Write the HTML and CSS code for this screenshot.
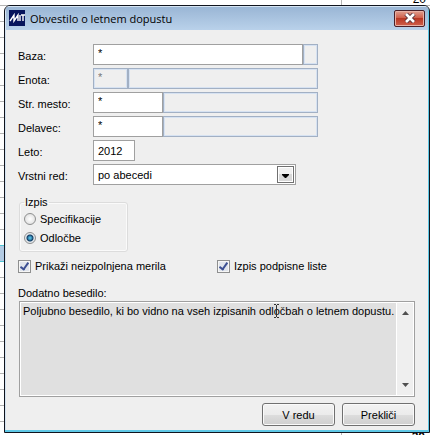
FILE: index.html
```html
<!DOCTYPE html>
<html lang="sl">
<head>
    <meta charset="UTF-8">
    <meta name="viewport" content="width=device-width, initial-scale=1.0">
    <title>Obvestilo o letnem dopustu</title>
    <link rel="stylesheet" href="styles.css">
</head>
<body>
    <div class="sheet-top"><span>20</span></div>
    <div class="sheet">
        <div class="selected-row"></div>
        <form class="dialog">
            <div class="titlebar">
                <svg class="logo" width="16" height="16" viewBox="0 0 16 16">
                    <rect width="16" height="16" fill="#07145c"/>
                    <path d="M1 11L5 5V11L9 5V11M11 5V11M12 5H16M14 5V11" fill="none" stroke="#fff" stroke-width="1.4"/>
                </svg>
                <h1>Obvestilo o letnem dopustu</h1>
                <button class="close" type="button" aria-label="Zapri">
                    <svg width="12" height="10" viewBox="0 0 12 10">
                        <path d="M2 1L10 9M10 1L2 9" stroke="#54303a" stroke-width="4.4"/>
                        <path d="M2 1L10 9M10 1L2 9" stroke="#fff" stroke-width="2.6"/>
                    </svg>
                </button>
            </div>
            <div class="content">
                <div class="fields">
                    <div class="row">
                        <label for="baza">Baza:</label>
                        <input class="box wide star" id="baza" type="text" value="*">
                        <input class="box tiny off" type="text" aria-label="Izbor baze" disabled>
                    </div>
                    <div class="row">
                        <label for="enota">Enota:</label>
                        <input class="box short star off" id="enota" type="text" value="*" disabled>
                        <input class="box wide off" type="text" aria-label="Naziv enote" disabled>
                    </div>
                    <div class="row">
                        <label for="mesto">Str. mesto:</label>
                        <input class="box medium star" id="mesto" type="text" value="*">
                        <input class="box wide off" type="text" aria-label="Naziv mesta" disabled>
                    </div>
                    <div class="row">
                        <label for="delavec">Delavec:</label>
                        <input class="box medium star" id="delavec" type="text" value="*">
                        <input class="box wide off" type="text" aria-label="Ime delavca" disabled>
                    </div>
                    <div class="row">
                        <label for="leto">Leto:</label>
                        <input class="box year" id="leto" type="text" value="2012">
                    </div>
                    <div class="row">
                        <label for="red">Vrstni red:</label>
                        <div class="select-wrap">
                            <select class="box" id="red">
                                <option>po abecedi</option>
                            </select>
                            <svg class="arrow" width="17" height="17" viewBox="0 0 17 17">
                                <rect x="0.5" y="0.5" width="16" height="16" fill="#fff" stroke="#707070"/>
                                <path d="M2 2H15V8H2Z" fill="#f0f0f0"/>
                                <path d="M2 8H15V15H2Z" fill="#d8d8d8"/>
                                <path d="M5 8H12V9L9 12H8L5 9Z" fill="#000"/>
                            </svg>
                        </div>
                    </div>
                </div>
                <fieldset class="group">
                    <legend>Izpis</legend>
                    <label><input type="radio" name="izpis">Specifikacije</label>
                    <label><input type="radio" name="izpis" checked>Odločbe</label>
                </fieldset>
                <div class="checks">
                    <label><input type="checkbox" checked>Prikaži neizpolnjena merila</label>
                    <label><input type="checkbox" checked>Izpis podpisne liste</label>
                </div>
                <label class="note-label" for="note">Dodatno besedilo:</label>
                <div class="note">
                    <textarea id="note">Poljubno besedilo, ki bo vidno na vseh izpisanih odločbah o letnem dopustu.</textarea>
                    <div class="scroll">
                        <svg width="7" height="4" viewBox="0 0 7 4"><path d="M0 4L3.5 0L7 4Z" fill="#505050"/></svg>
                        <svg width="7" height="4" viewBox="0 0 7 4"><path d="M0 0L3.5 4L7 0Z" fill="#505050"/></svg>
                    </div>
                    <svg class="ibeam" width="5" height="14" viewBox="0 0 5 14">
                        <path d="M0 0.5H2M3 0.5H5M2.5 1V13M0 13.5H2M3 13.5H5" stroke="#333" fill="none"/>
                    </svg>
                </div>
                <div class="buttons">
                    <button type="submit">V redu</button>
                    <button type="button">Prekliči</button>
                </div>
            </div>
        </form>
    </div>
    <div class="sheet-bottom"><span>20</span></div>
</body>
</html>
```

FILE: styles.css
```css
*,
*::before {
    box-sizing: border-box;
}
body {
    margin: 0;
    background: #fff;
    color: #000;
    font-family: "Liberation Sans", Arial, sans-serif;
    font-size: 11px;
    line-height: 16px;
}

/* spreadsheet behind the dialog */
.sheet-top,
.sheet-bottom {
    display: flex;
    justify-content: flex-end;
    overflow: hidden;
    font-size: 12px;
    background: linear-gradient(#b4b4b4, #b4b4b4) 341px 0 / 1px 100% no-repeat;
}
.sheet-top {
    height: 5px;
    align-items: flex-end;
    padding-right: 4px;
    line-height: 12px;
}
.sheet-bottom {
    height: 3px;
    padding-right: 5px;
    line-height: 8px;
    font-weight: bold;
}
.sheet {
    position: relative;
    padding-left: 4px;
    background: repeating-linear-gradient(#b4b4b4 0 1px, #fff 1px 16px);
}
.selected-row {
    position: absolute;
    left: 0;
    top: 240px;
    width: 4px;
    height: 17px;
    background: #b3cbe4;
    border: solid #4fc4d4;
    border-width: 1px 0;
}

/* dialog window */
.dialog {
    margin: 0;
    border: 1px solid #10141e;
    border-radius: 6px 6px 0 0;
    background: #efefef;
    box-shadow: inset -1px -2px #5fc8e6, inset 1px 1px #d5e4f2;
    overflow: hidden;
}
.titlebar {
    display: flex;
    align-items: center;
    height: 24px;
    margin: 0 1px;
    padding: 0 3px;
    background: linear-gradient(#d5e4f2 0 1px, #9ab6d5 1px, #b9d1ea);
}
.titlebar h1 {
    flex: 1;
    margin: 0 0 0 5px;
    font: 11px "Open Sans", "Noto Sans", sans-serif;
}
.close {
    display: flex;
    align-items: center;
    justify-content: center;
    width: 31px;
    height: 17px;
    padding: 0;
    border: 1px solid #4a2028;
    border-radius: 2px;
    background: linear-gradient(#e0a090, #d0604c 45%, #b83824 50%, #d0604c);
    box-shadow: inset 0 0 0 1px #e8b0a4;
}
.content {
    padding: 14px 14px 6px 13px;
}

/* form rows */
.fields {
    display: flex;
    flex-direction: column;
    gap: 3px;
}
.row {
    display: flex;
    width: 300px;
}
.row label {
    width: 75px;
    padding-top: 4px;
}
.box {
    height: 21px;
    margin: 0;
    padding: 0 4px;
    border: 1px solid #a0a0a0;
    border-radius: 0;
    background: #fff;
    color: #000;
    font: inherit;
}
.star {
    padding-bottom: 4px;
}
.wide {
    flex: 1;
    min-width: 0;
}
.medium {
    width: 70px;
}
.short {
    width: 35px;
}
.tiny {
    width: 15px;
}
.year {
    width: 42px;
}
.off {
    border-color: #a2b0c4;
    background: #efefef;
    color: #777;
    box-shadow: inset 0 0 0 1px #d6e2f2;
}
.select-wrap {
    position: relative;
    width: 203px;
}
.select-wrap select {
    width: 100%;
    appearance: none;
}
.arrow {
    position: absolute;
    top: 2px;
    right: 2px;
    pointer-events: none;
}

/* radio group */
.group {
    display: flex;
    flex-direction: column;
    gap: 3px;
    width: 109px;
    margin: 9px 0 0 1px;
    padding: 1px 4px 5px;
    border: 1px solid #dcdcdc;
    border-radius: 3px;
    box-shadow: inset 0 0 0 1px #fafafa;
}
.group legend {
    padding: 0 1px;
}
.group label,
.checks label {
    display: flex;
    align-items: center;
    gap: 4px;
}
input[type="radio"],
input[type="checkbox"] {
    appearance: none;
    flex: none;
    margin: 0;
    border: 1px solid #8e8f8f;
}
input[type="radio"] {
    width: 12px;
    height: 12px;
    border-radius: 50%;
    background: radial-gradient(#fff, #d8d8d8);
}
input[type="radio"]:checked {
    background: radial-gradient(#4cb4dc 0 1px, #123c64 3px, #e4e8ec 4px);
}
input[type="checkbox"] {
    width: 13px;
    height: 13px;
    background: #e0e5ec;
    box-shadow: inset 0 0 0 1px #f6f6f6;
}
input[type="checkbox"]:checked::before {
    content: "";
    display: block;
    width: 5px;
    height: 9px;
    margin: 0 0 0 3px;
    border: solid #3c4f92;
    border-width: 0 2px 2px 0;
    transform: rotate(35deg);
}
.checks {
    display: grid;
    grid-template-columns: 199px 1fr;
    margin-top: 6px;
}

/* free text */
.note-label {
    display: block;
    margin-top: 11px;
}
.note {
    position: relative;
    display: flex;
    height: 96px;
    margin-left: 1px;
    border: 1px solid #a0a0a0;
    background: #e0e0e0;
    box-shadow: inset 0 0 0 1px #fff;
    padding: 1px;
}
.note textarea {
    flex: 1;
    min-width: 0;
    margin: 0;
    padding: 0 2px;
    border: 0;
    background: #e0e0e0;
    color: #000;
    font: inherit;
    resize: none;
    overflow: hidden;
    white-space: pre;
}
.scroll {
    display: flex;
    flex-direction: column;
    align-items: center;
    justify-content: space-between;
    width: 17px;
    padding: 8px 0;
    border-left: 1px solid #fff;
    background: #efefef;
}
.ibeam {
    position: absolute;
    left: 254px;
    top: 2px;
    pointer-events: none;
}
.buttons {
    display: flex;
    justify-content: flex-end;
    gap: 7px;
    margin-top: 6px;
}
.buttons button {
    width: 73px;
    height: 23px;
    padding: 0;
    border: 1px solid #707070;
    border-radius: 3px;
    background: linear-gradient(#f2f2f2, #ebebeb 50%, #dddddd 50%, #cfcfcf);
    box-shadow: inset 0 0 0 1px #fafafa;
    color: #000;
    font: inherit;
}
```
